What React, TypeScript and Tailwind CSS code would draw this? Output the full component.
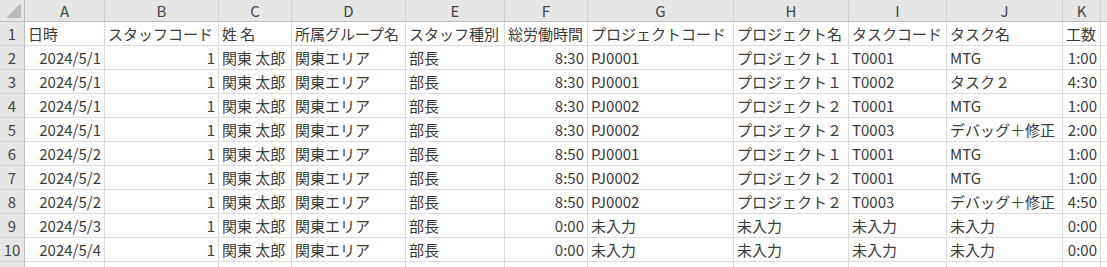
import React from "react";

const cols = ["A", "B", "C", "D", "E", "F", "G", "H", "I", "J", "K", ""];
const right = [true, true, false, false, false, true, false, false, false, false, true, false];

const header = ["日時", "スタッフコード", "姓 名", "所属グループ名", "スタッフ種別", "総労働時間", "プロジェクトコード", "プロジェクト名", "タスクコード", "タスク名", "工数", ""];

const raw: [string, string, string, string, string, string, string][] = [
  ["2024/5/1", "8:30", "PJ0001", "プロジェクト１", "T0001", "MTG", "1:00"],
  ["2024/5/1", "8:30", "PJ0001", "プロジェクト１", "T0002", "タスク２", "4:30"],
  ["2024/5/1", "8:30", "PJ0002", "プロジェクト２", "T0001", "MTG", "1:00"],
  ["2024/5/1", "8:30", "PJ0002", "プロジェクト２", "T0003", "デバッグ＋修正", "2:00"],
  ["2024/5/2", "8:50", "PJ0001", "プロジェクト１", "T0001", "MTG", "1:00"],
  ["2024/5/2", "8:50", "PJ0002", "プロジェクト２", "T0001", "MTG", "1:00"],
  ["2024/5/2", "8:50", "PJ0002", "プロジェクト２", "T0003", "デバッグ＋修正", "4:50"],
  ["2024/5/3", "0:00", "未入力", "未入力", "未入力", "未入力", "0:00"],
  ["2024/5/4", "0:00", "未入力", "未入力", "未入力", "未入力", "0:00"],
];

const rows: string[][] = raw.map((r) => [r[0], "1", "関東 太郎", "関東エリア", "部長", r[1], r[2], r[3], r[4], r[5], r[6], ""]);

const gridCols = "grid grid-cols-[25px_80px_114px_73px_114px_99px_83px_146px_115px_98px_116px_38px_1fr]";

export default function App() {
  const allRows = [header, ...rows];
  return (
    <div className="w-[1107px] h-[267px] overflow-hidden bg-white text-[15px] text-[#3a3a3a] leading-none" style={{ fontFamily: '"Noto Sans CJK JP", "Noto Sans", sans-serif' }}>
      <div className={gridCols}>
        <div className="relative h-[22px] bg-[#e6e6e6] border-r border-b border-[#bdbdbd]">
          <div className="absolute right-[3px] bottom-[3px] w-0 h-0 border-l-[15px] border-l-transparent border-b-[15px] border-b-[#b9b9b9]" />
        </div>
        {cols.map((c, i) => (
          <div key={i} className="h-[22px] bg-[#e6e6e6] border-r border-b border-r-[#d0d0d0] border-b-[#bdbdbd] flex items-center justify-center text-[#444444]">
            {c}
          </div>
        ))}
        {[...allRows, cols.map(() => "")].map((r, ri) => (
          <React.Fragment key={ri}>
            <div className="h-[24px] bg-[#e6e6e6] border-r border-b border-r-[#bdbdbd] border-b-[#d0d0d0] flex items-center justify-center text-[#444444]">
              {ri < 10 ? ri + 1 : ""}
            </div>
            {r.map((v, ci) => (
              <div
                key={ci}
                className={`h-[24px] border-r border-b border-[#dadada] flex items-center whitespace-nowrap overflow-hidden px-[3px] ${ri > 0 && right[ci] ? "justify-end" : "justify-start"}`}
              >
                {v}
              </div>
            ))}
          </React.Fragment>
        ))}
      </div>
    </div>
  );
}
